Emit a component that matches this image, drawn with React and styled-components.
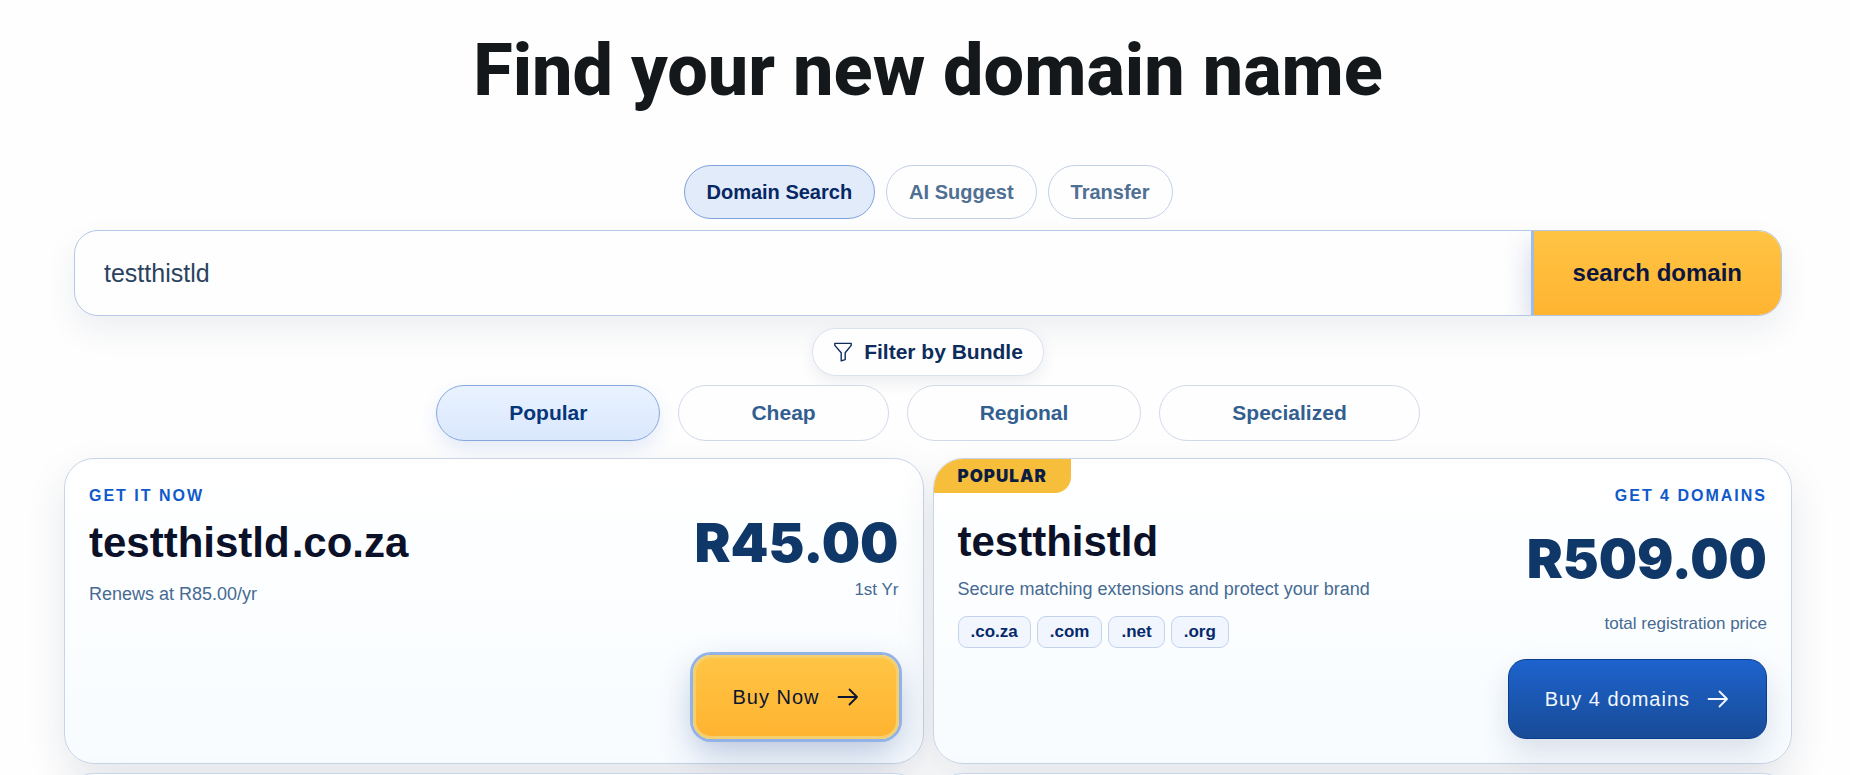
import React, { useState } from "react";
import styled, { createGlobalStyle, css } from "styled-components";

const searchModes = ["Domain Search", "AI Suggest", "Transfer"];
const categories = ["Popular", "Cheap", "Regional", "Specialized"];
const extensions = [".co.za", ".com", ".net", ".org"];

const FunnelIcon = () => (
  <svg width="20" height="20" viewBox="0 0 20 20" fill="none" stroke="currentColor" strokeWidth="1.4" strokeLinejoin="round" aria-hidden="true">
    <path d="M1.8 1.4h16.4v2L12.2 10.8v6.8l-4 1.2v-8L1.8 3.4z" />
  </svg>
);

const ArrowIcon = () => (
  <svg width="24" height="24" viewBox="0 0 24 24" fill="none" stroke="currentColor" strokeWidth="1.8" strokeLinecap="round" strokeLinejoin="round" aria-hidden="true">
    <path d="M2.5 12H21M13.5 4.5 21 12l-7.5 7.5" />
  </svg>
);

const App = () => {
  const [mode, setMode] = useState("Domain Search");
  const [category, setCategory] = useState("Popular");
  const [query, setQuery] = useState("testthistld");

  return (
    <>
      <GlobalStyle />
      <Page>
        <Heading>Find your new domain name</Heading>
        <Modes>
          {searchModes.map((item) => (
            <ModeButton key={item} type="button" $active={item === mode} onClick={() => setMode(item)}>
              {item}
            </ModeButton>
          ))}
        </Modes>
        <SearchForm onSubmit={(e) => e.preventDefault()}>
          <SearchInput
            aria-label="Domain name"
            value={query}
            onChange={(e) => setQuery(e.target.value)}
          />
          <SearchButton type="submit">search domain</SearchButton>
        </SearchForm>
        <FilterButton type="button">
          <FunnelIcon />
          Filter by Bundle
        </FilterButton>
        <Categories>
          {categories.map((item) => (
            <CategoryButton key={item} type="button" $active={item === category} onClick={() => setCategory(item)}>
              {item}
            </CategoryButton>
          ))}
        </Categories>
        <Results>
          <Card>
            <Info>
              <Label>Get it now</Label>
              <DomainName>
                <span>testthistld</span>
                <span>.co.za</span>
              </DomainName>
              <Note $gap={15}>Renews at R85.00/yr</Note>
            </Info>
            <Purchase $top={28}>
              <Price>R45.00</Price>
              <Note $small $gap={3}>1st Yr</Note>
              <BuyButton type="button" $focused>
                Buy Now
                <ArrowIcon />
              </BuyButton>
            </Purchase>
          </Card>
          <Card>
            <Badge>Popular</Badge>
            <Info $badged>
              <DomainName>testthistld</DomainName>
              <Note $gap={11}>Secure matching extensions and protect your brand</Note>
              <Chips>
                {extensions.map((ext) => (
                  <Chip key={ext}>{ext}</Chip>
                ))}
              </Chips>
            </Info>
            <Purchase>
              <Label>Get 4 domains</Label>
              <Price $spaced>R509.00</Price>
              <Note $small $gap={21}>total registration price</Note>
              <BuyButton type="button" $blue>
                Buy 4 domains
                <ArrowIcon />
              </BuyButton>
            </Purchase>
          </Card>
          <Card />
          <Card />
        </Results>
      </Page>
    </>
  );
};

export default App;

const GlobalStyle = createGlobalStyle`
  * {
    box-sizing: border-box;
  }
  body {
    margin: 0;
    background: #fefefe;
    font-family: "Liberation Sans", Arial, sans-serif;
  }
  button, input {
    font-family: inherit;
  }
  button {
    cursor: pointer;
  }
`;

const Page = styled.main`
  display: flex;
  flex-direction: column;
  align-items: center;
  height: 100vh;
  overflow: hidden;
  padding: 25px 58px 0 64px;
`;

const Heading = styled.h1`
  margin: 0;
  font-family: Roboto, sans-serif;
  font-size: 72px;
  font-weight: 800;
  line-height: 92px;
  color: #15181b;
`;

const Modes = styled.div`
  display: flex;
  gap: 11px;
  margin-top: 48px;
`;

const ModeButton = styled.button`
  height: 54px;
  padding: 0 22px;
  border: 1px solid ${({ $active }) => ($active ? "#7fa3dc" : "#c3d0e8")};
  border-radius: 27px;
  background: ${({ $active }) => ($active ? "#e1ebfa" : "#fefefe")};
  color: ${({ $active }) => ($active ? "#062763" : "#4f6f93")};
  font-size: 20px;
  font-weight: 700;
`;

const SearchForm = styled.form`
  display: flex;
  align-self: stretch;
  height: 86px;
  margin: 11px 10px 0;
  overflow: hidden;
  flex-shrink: 0;
  border: 1px solid #b5c8e4;
  border-radius: 24px;
  background: #fefefe;
  box-shadow: 0 14px 32px rgba(20, 50, 90, 0.08);
`;

const SearchInput = styled.input`
  flex: 1;
  padding: 0 29px;
  border: none;
  outline: none;
  background: transparent;
  color: #2a435e;
  font-size: 25px;
`;

const SearchButton = styled.button`
  padding: 0 39px;
  border: none;
  background: linear-gradient(#ffc444, #ffb431);
  box-shadow: 0 0 0 3px #9fbde4, 0 14px 30px rgba(20, 60, 150, 0.28);
  color: #0b1540;
  font-size: 24px;
  font-weight: 700;
`;

const FilterButton = styled.button`
  display: flex;
  align-items: center;
  gap: 11px;
  height: 48px;
  margin-top: 12px;
  padding: 0 20px;
  flex-shrink: 0;
  border: 1px solid #dbe2ef;
  border-radius: 24px;
  background: #fefefe;
  box-shadow: 0 6px 16px rgba(20, 40, 80, 0.08);
  color: #0d2c5c;
  font-size: 21px;
  font-weight: 700;
`;

const Categories = styled.div`
  display: flex;
  gap: 18px;
  margin-top: 9px;
`;

const CategoryButton = styled.button`
  height: 56px;
  padding: 0 72px;
  border: 1px solid #d2d9e8;
  border-radius: 28px;
  background: #fefefe;
  color: #335f90;
  font-size: 21px;
  font-weight: 700;
  ${({ $active }) =>
    $active &&
    css`
      border-color: #86a8de;
      background: linear-gradient(#e9f2ff, #dae8fd);
      box-shadow: 0 8px 18px rgba(40, 100, 200, 0.12);
      color: #063579;
    `}
`;

const Results = styled.section`
  display: grid;
  grid-template-columns: 1fr 1fr;
  gap: 9px;
  align-self: stretch;
  margin-top: 17px;
`;

const Card = styled.article`
  position: relative;
  display: flex;
  justify-content: space-between;
  min-height: 306px;
  padding: 24px;
  border: 1px solid #c8d4e8;
  border-radius: 30px;
  background: linear-gradient(#ffffff, #f8fcff);
  box-shadow: 0 16px 40px rgba(20, 40, 80, 0.1);
`;

const Badge = styled.span`
  position: absolute;
  top: 0;
  left: 0;
  padding: 0 24px;
  border-radius: 29px 0 16px 0;
  background: #f7be3b;
  color: #0c1d42;
  font-family: Inter, sans-serif;
  font-size: 17px;
  font-weight: 900;
  letter-spacing: 1px;
  line-height: 34px;
  text-transform: uppercase;
`;

const Info = styled.div`
  padding-top: ${({ $badged }) => ($badged ? "25px" : "0")};
`;

const Purchase = styled.div`
  display: flex;
  flex-direction: column;
  align-items: flex-end;
  padding-top: ${({ $top }) => $top || 0}px;
`;

const Label = styled.p`
  margin: 0;
  color: #0f5acb;
  font-size: 16px;
  font-weight: 700;
  letter-spacing: 2px;
  line-height: 26px;
  text-transform: uppercase;
`;

const DomainName = styled.h2`
  display: flex;
  gap: 2px;
  margin: 10px 0 0;
  color: #0a1128;
  font-size: 42px;
  line-height: 48px;
`;

const Note = styled.p`
  margin: ${({ $gap }) => $gap}px 0 0;
  color: #466a92;
  font-size: ${({ $small }) => ($small ? "17px" : "18px")};
  line-height: 24px;
`;

const Price = styled.strong`
  margin-top: ${({ $spaced }) => ($spaced ? "18px" : "0")};
  color: #0f3768;
  font-family: Inter, sans-serif;
  font-size: 54px;
  font-weight: 900;
  line-height: 64px;
`;

const Chips = styled.div`
  display: flex;
  gap: 6px;
  margin-top: 15px;
`;

const Chip = styled.span`
  padding: 0 12px;
  border: 1px solid #c3d3ec;
  border-radius: 9px;
  background: #f1f6fe;
  color: #07296a;
  font-size: 17px;
  font-weight: 700;
  line-height: 30px;
`;

const BuyButton = styled.button`
  display: flex;
  align-items: center;
  gap: 16px;
  height: 80px;
  margin-top: auto;
  padding: 0 36px;
  border: 1px solid ${({ $blue }) => ($blue ? "#0c3c8c" : "#f5c95c")};
  border-radius: 18px;
  background: ${({ $blue }) =>
    $blue ? "linear-gradient(#1d63cd, #184b97)" : "linear-gradient(#ffc444, #ffb431)"};
  box-shadow: 0 14px 30px rgba(20, 50, 100, 0.14);
  color: ${({ $blue }) => ($blue ? "#f4f8ff" : "#0b1530")};
  font-size: 20px;
  letter-spacing: 1px;
  ${({ $focused }) =>
    $focused &&
    css`
      height: 84px;
      border: 3px solid #f3cf6e;
      box-shadow: 0 0 0 3px #93b2e6, 0 14px 34px rgba(30, 70, 140, 0.3);
    `}
`;
